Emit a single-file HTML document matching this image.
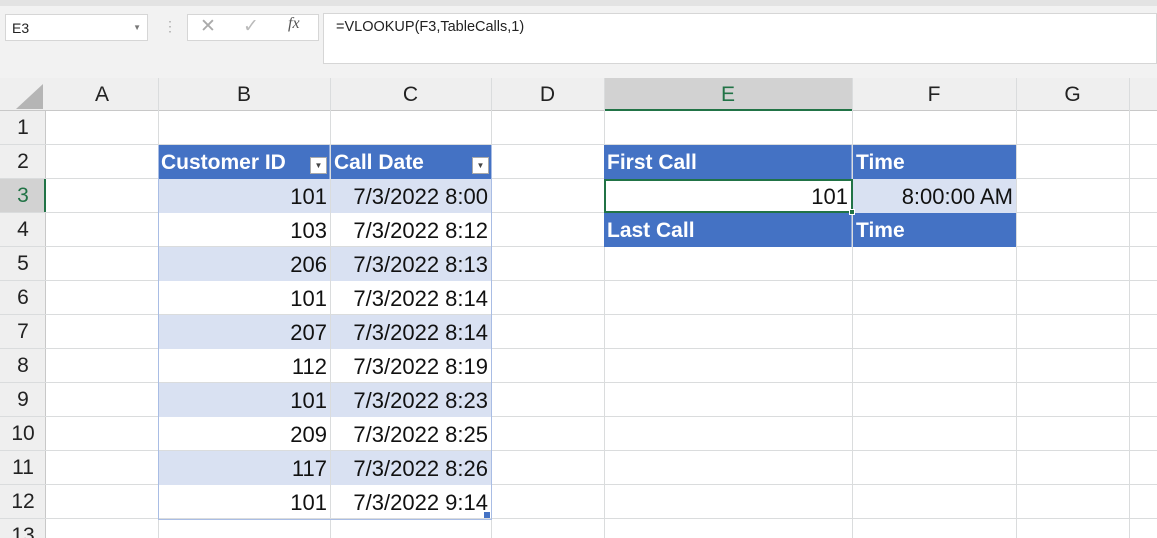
<!DOCTYPE html>
<html><head><meta charset="utf-8"><style>
*{margin:0;padding:0;box-sizing:border-box}
html,body{width:1157px;height:538px;overflow:hidden}
body{background:#fff;font-family:"Liberation Sans",Arial,sans-serif;position:relative}
.a{position:absolute}
.vl{position:absolute;top:78px;height:460px;width:1px;background:#dadcdd}
.hl{position:absolute;left:0;right:0;height:1px;background:#dadcdd}
.rn{position:absolute;left:0;width:46px;height:34px;text-align:center;font-size:21px;line-height:34px;color:#222}
.ch{position:absolute;top:78px;height:33px;text-align:center;font-size:21px;line-height:34px;color:#222}
.c{position:absolute;height:34px;font-size:22px;line-height:35px;color:#111;white-space:nowrap;padding:0 3px}
.r{text-align:right}
.h{background:#4472c4;color:#fff;font-weight:bold;font-size:21px}
.s{background:#d9e1f2}
</style></head><body>
<div class="a" style="left:0;top:0;width:1157px;height:78px;background:#f2f2f2"></div>
<div class="a" style="left:0;top:0;width:1157px;height:6px;background:#e3e3e3"></div>
<div class="a" style="left:5px;top:14px;width:143px;height:27px;background:#fff;border:1px solid #d6d6d6;font-size:14px;line-height:26px;padding-left:6px;color:#222">E3<span style="position:absolute;right:6px;top:0;font-size:8px;color:#777">▼</span></div>
<div class="a" style="left:163px;top:18px;color:#aaa;font-size:14px">⋮</div>
<div class="a" style="left:187px;top:14px;width:132px;height:27px;background:#fff;border:1px solid #d6d6d6"></div>
<div class="a" style="left:200px;top:15px;color:#aaa;font-size:19px">✕</div>
<div class="a" style="left:243px;top:15px;color:#bbb;font-size:19px">✓</div>
<div class="a" style="left:288px;top:15px;color:#555;font-size:16px;font-style:italic;font-family:'Liberation Serif',serif">fx</div>
<div class="a" style="left:323px;top:13px;width:834px;height:51px;background:#fff;border:1px solid #d6d6d6;font-size:14.5px;padding:5px 0 0 12px;color:#222">=VLOOKUP(F3,TableCalls,1)</div>
<div class="a" style="left:0;top:78px;width:1157px;height:33px;background:#efefef;border-bottom:1px solid #c8c8c8"></div>
<div class="a" style="left:604px;top:78px;width:248px;height:33px;background:#d2d2d2;border-bottom:2px solid #217346"></div>
<svg class="a" style="left:14px;top:84px" width="30" height="26"><polygon points="29,0 29,25 2,25" fill="#b5b5b5"/></svg>
<div class="a" style="left:0;top:111px;width:46px;height:427px;background:#efefef;border-right:1px solid #c8c8c8"></div>
<div class="a" style="left:0;top:179px;width:46px;height:34px;background:#d2d2d2;border-right:2px solid #217346"></div>
<div class="vl" style="left:158px"></div><div class="vl" style="left:330px"></div><div class="vl" style="left:491px"></div><div class="vl" style="left:604px"></div><div class="vl" style="left:852px"></div><div class="vl" style="left:1016px"></div><div class="vl" style="left:1129px"></div>
<div class="hl" style="top:144px"></div><div class="hl" style="top:178px"></div><div class="hl" style="top:212px"></div><div class="hl" style="top:246px"></div><div class="hl" style="top:280px"></div><div class="hl" style="top:314px"></div><div class="hl" style="top:348px"></div><div class="hl" style="top:382px"></div><div class="hl" style="top:416px"></div><div class="hl" style="top:450px"></div><div class="hl" style="top:484px"></div><div class="hl" style="top:518px"></div>
<div class="ch" style="left:46px;width:112px">A</div><div class="ch" style="left:158px;width:172px">B</div><div class="ch" style="left:330px;width:161px">C</div><div class="ch" style="left:491px;width:113px">D</div><div class="ch" style="left:604px;width:248px;color:#217346">E</div><div class="ch" style="left:852px;width:164px">F</div><div class="ch" style="left:1016px;width:113px">G</div>
<div class="rn" style="top:111px">1</div><div class="rn" style="top:145px">2</div><div class="rn" style="top:179px;color:#217346">3</div><div class="rn" style="top:213px">4</div><div class="rn" style="top:247px">5</div><div class="rn" style="top:281px">6</div><div class="rn" style="top:315px">7</div><div class="rn" style="top:349px">8</div><div class="rn" style="top:383px">9</div><div class="rn" style="top:417px">10</div><div class="rn" style="top:451px">11</div><div class="rn" style="top:485px">12</div><div class="rn" style="top:519px">13</div>
<div class="c h" style="left:158px;top:145px;width:172px;border-right:1px solid #8ea9db">Customer ID<span style="position:absolute;right:2px;top:12px;width:17px;height:17px;background:#fff;border:1px solid #aaa;font-size:8px;line-height:16px;text-align:center;color:#444">▼</span></div>
<div class="c h" style="left:331px;top:145px;width:160px">Call Date<span style="position:absolute;right:2px;top:12px;width:17px;height:17px;background:#fff;border:1px solid #aaa;font-size:8px;line-height:16px;text-align:center;color:#444">▼</span></div>
<div class="c r s" style="left:158px;top:179px;width:172px">101</div><div class="c r s" style="left:331px;top:179px;width:160px">7/3/2022 8:00</div>
<div class="c r" style="left:158px;top:213px;width:172px">103</div><div class="c r" style="left:331px;top:213px;width:160px">7/3/2022 8:12</div>
<div class="c r s" style="left:158px;top:247px;width:172px">206</div><div class="c r s" style="left:331px;top:247px;width:160px">7/3/2022 8:13</div>
<div class="c r" style="left:158px;top:281px;width:172px">101</div><div class="c r" style="left:331px;top:281px;width:160px">7/3/2022 8:14</div>
<div class="c r s" style="left:158px;top:315px;width:172px">207</div><div class="c r s" style="left:331px;top:315px;width:160px">7/3/2022 8:14</div>
<div class="c r" style="left:158px;top:349px;width:172px">112</div><div class="c r" style="left:331px;top:349px;width:160px">7/3/2022 8:19</div>
<div class="c r s" style="left:158px;top:383px;width:172px">101</div><div class="c r s" style="left:331px;top:383px;width:160px">7/3/2022 8:23</div>
<div class="c r" style="left:158px;top:417px;width:172px">209</div><div class="c r" style="left:331px;top:417px;width:160px">7/3/2022 8:25</div>
<div class="c r s" style="left:158px;top:451px;width:172px">117</div><div class="c r s" style="left:331px;top:451px;width:160px">7/3/2022 8:26</div>
<div class="c r" style="left:158px;top:485px;width:172px">101</div><div class="c r" style="left:331px;top:485px;width:160px">7/3/2022 9:14</div>
<div class="a" style="left:158px;top:145px;width:334px;height:375px;border:1px solid #a9bde4;border-top:none"></div>
<div class="a" style="left:484px;top:512px;width:6px;height:6px;background:#4472c4"></div>
<div class="c h" style="left:604px;top:145px;width:248px;border-right:1px solid #8ea9db">First Call</div>
<div class="c h" style="left:853px;top:145px;width:163px">Time</div>
<div class="c r" style="left:604px;top:179px;width:249px;background:#fff;border:2px solid #217346;line-height:32px">101</div>
<div class="c r s" style="left:853px;top:179px;width:163px">8:00:00 AM</div>
<div class="c h" style="left:604px;top:213px;width:248px;border-right:1px solid #8ea9db">Last Call</div>
<div class="c h" style="left:853px;top:213px;width:163px">Time</div>
<div class="a" style="left:849px;top:209px;width:6px;height:6px;background:#217346;border:1px solid #fff"></div>
</body></html>
